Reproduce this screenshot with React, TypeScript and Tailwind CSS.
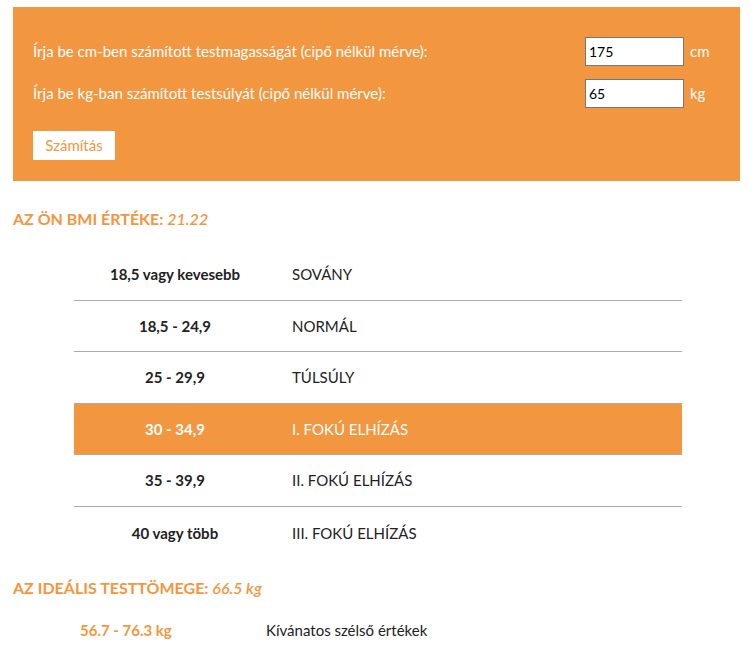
import React from "react";

const rows = [
  { range: "18,5 vagy kevesebb", label: "SOVÁNY", active: false, h: "h-[52px]" },
  { range: "18,5 - 24,9", label: "NORMÁL", active: false, h: "h-[51px]" },
  { range: "25 - 29,9", label: "TÚLSÚLY", active: false, h: "h-[52px]" },
  { range: "30 - 34,9", label: "I. FOKÚ ELHÍZÁS", active: true, h: "h-[51px]" },
  { range: "35 - 39,9", label: "II. FOKÚ ELHÍZÁS", active: false, h: "h-[52px]" },
  { range: "40 vagy több", label: "III. FOKÚ ELHÍZÁS", active: false, h: "h-[52px]" },
];

export default function App() {
  return (
    <div className="w-[753px] h-[659px] bg-white px-[13px] pt-[7px] text-[15px] text-[#222] font-['Lato','Open_Sans',sans-serif] overflow-hidden">
      <div className="bg-[#f39640] h-[174px] pl-5 pr-[29px] pt-[30px]">
        <div className="flex items-center justify-between h-[29px]">
          <span className="text-white">Írja be cm-ben számított testmagasságát (cipő nélkül mérve):</span>
          <div className="flex items-center gap-[6px]">
            <input
              defaultValue="175"
              className="w-[99px] h-[29px] bg-white border border-[#777] px-[3px] text-[14px] text-black outline-none"
            />
            <span className="text-white w-[21px]">cm</span>
          </div>
        </div>
        <div className="flex items-center justify-between h-[29px] mt-[13px]">
          <span className="text-white">Írja be kg-ban számított testsúlyát (cipő nélkül mérve):</span>
          <div className="flex items-center gap-[6px]">
            <input
              defaultValue="65"
              className="w-[99px] h-[29px] bg-white border border-[#777] px-[3px] text-[14px] text-black outline-none"
            />
            <span className="text-white w-[21px]">kg</span>
          </div>
        </div>
        <button className="mt-[23px] h-[29px] w-[82px] bg-white text-[#f39640] text-[15px]">
          Számítás
        </button>
      </div>

      <h2 className="mt-[28px] h-[20px] leading-[20px] text-[16px] font-bold text-[#f39640] uppercase">
        Az Ön BMI értéke: <span className="italic font-semibold">21.22</span>
      </h2>

      <div className="ml-[61px] w-[608px] mt-[20px]">
        {rows.map((r, i) => (
          <div
            key={r.range}
            className={`flex items-center ${r.h} ${i < rows.length - 1 ? "border-b border-[#aaa]" : ""} ${r.active ? "bg-[#f39640] text-white" : ""}`}
          >
            <div className="w-[202px] text-center font-bold">{r.range}</div>
            <div className="pl-[16px]">{r.label}</div>
          </div>
        ))}
      </div>

      <h2 className="mt-[19px] h-[20px] leading-[20px] text-[16px] font-bold text-[#f39640] uppercase">
        Az ideális testtömege: <span className="italic font-semibold normal-case">66.5 kg</span>
      </h2>

      <div className="flex items-center mt-[22px] h-[20px]">
        <div className="w-[253px] pl-[67px] font-bold text-[#f39640]">56.7 - 76.3 kg</div>
        <div>Kívánatos szélső értékek</div>
      </div>
    </div>
  );
}
